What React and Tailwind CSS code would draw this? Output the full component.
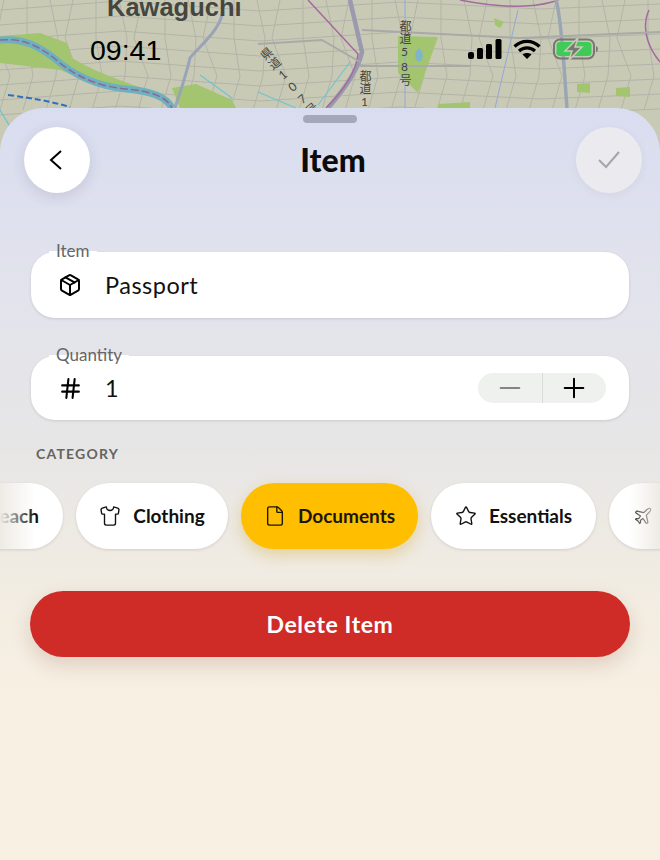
import React from 'react';
import { Package, Hash, Minus, Plus, Shirt, File, Star, Plane, Umbrella } from 'lucide-react';

const font = { fontFamily: 'Lato, "Noto Sans CJK JP", sans-serif' };

// thin street lines for the map backdrop
const streets = [];
for (let i = 0; i < 30; i++) {
  const x = i * 23 + 4;
  streets.push(`M${x} 0 L${x + (i % 3) * 8 - 8} 38 L${x + 6} 76 L${x - 4} 110`);
}
for (let i = 0; i < 8; i++) {
  const y = i * 15 + 4;
  streets.push(`M0 ${y + 6} L120 ${y - 3} L260 ${y + 7} L400 ${y - 2} L540 ${y + 5} L660 ${y}`);
}

const MapBackdrop = () => (
  <div className="absolute inset-x-0 top-0 h-[150px] bg-[#c9cab6]">
    <svg width="660" height="150" className="absolute inset-0" fill="none">
      <path d={streets.join(' ')} stroke="#b3b4a8" strokeWidth="1" />
      <path d="M0 36 L40 33 L67 43 L72 58 C95 72 125 82 142 88 L110 88 C90 82 75 76 60 70 L0 63 Z" fill="#a3c56f" />
      <path d="M172 88 L196 84 L232 100 L236 108 L180 108 Z" fill="#a3c56f" />
      <path d="M398 36 L438 37 L418 93 L398 73 Z" fill="#a3c56f" />
      <path d="M419 48 C424 52 424 60 419 62 C414 60 414 52 419 48 Z" fill="#7fb4cb" />
      <path d="M494 18 L504 22 L500 28 L495 25 Z M577 84 L590 83 L590 93 L577 92 Z M616 88 L630 87 L630 97 L616 96 Z M438 104 L470 102 L470 108 L438 108 Z" fill="#a3c56f" />
      <path d="M0 40 C24 38 38 46 54 58 C72 74 94 86 126 89 C150 91 166 96 172 108" stroke="#6fb0c0" strokeWidth="7" />
      <path d="M0 40 C24 38 38 46 54 58 C72 74 94 86 126 89 C150 91 166 96 172 108" stroke="#8a6a95" strokeWidth="1.5" strokeDasharray="8 3" />
      <path d="M8 95 C30 98 50 101 70 107" stroke="#2f6fc0" strokeWidth="2" strokeDasharray="6 3" />
      <path d="M222 14 C220 30 196 50 190 58 C186 76 180 92 175 108" stroke="#9aa4b8" strokeWidth="3" />
      <path d="M350 0 L362 52 C358 72 342 92 328 108" stroke="#9a99ae" strokeWidth="4.5" />
      <path d="M308 0 L358 54 C356 74 340 94 326 108" stroke="#a46aa0" strokeWidth="1.5" />
      <path d="M460 0 C500 8 530 8 552 2 C560 0 560 -2 562 -2" stroke="#a46aa0" strokeWidth="1.5" />
      <path d="M556 0 C562 20 564 70 567 108" stroke="#9aa6b4" strokeWidth="3.5" />
      <path d="M649 10 C640 30 650 50 660 62" stroke="#a46aa0" strokeWidth="1.5" />
      <path d="M405 0 L405 108 M518 10 L495 108" stroke="#90a8d8" strokeWidth="1" />
      <path d="M350 62 L318 105 M200 75 L232 98 M0 110 L24 150 M258 92 L296 108" stroke="#6fc4cf" strokeWidth="1.2" />
      <path d="M362 30 L520 38 L660 32 M258 44 L322 40 L360 62 M360 66 L470 66" stroke="#a9aaa6" strokeWidth="2" />
    </svg>
    <span className="absolute left-[107px] top-[-12px] text-[25.5px] font-bold text-[#45463f]" style={{ fontFamily: 'Liberation Sans, sans-serif' }}>Kawaguchi</span>
    <span className="absolute left-[398px] top-[20px] text-[12px] leading-[13px] text-[#45463f] [text-orientation:upright] [writing-mode:vertical-rl]" style={font}>都道58号</span>
    <span className="absolute left-[358px] top-[70px] text-[12px] leading-[13px] text-[#45463f] [text-orientation:upright] [writing-mode:vertical-rl]" style={font}>都道1</span>
    <span className="absolute left-[282px] top-[40px] rotate-[-39deg] text-[12px] leading-[13px] tracking-[0.5px] text-[#45463f] [text-orientation:upright] [writing-mode:vertical-rl]" style={font}>県道107号</span>
  </div>
);

const StatusIcons = () => (
  <div className="flex items-center">
    <svg width="34" height="20" viewBox="0 0 34 20" fill="#000">
      <rect x="0" y="13" width="6" height="7" rx="2" />
      <rect x="9" y="9" width="6" height="11" rx="1.5" />
      <rect x="18" y="5" width="6" height="15" rx="1.5" />
      <rect x="27.5" y="0" width="6" height="20" rx="1.5" />
    </svg>
    <svg width="28" height="20" viewBox="0 0 28 20" fill="none" stroke="#000" strokeWidth="3.2" className="ml-[11px]">
      <path d="M1.5 7.5 C8.5 0.6 19.5 0.6 26.5 7.5" />
      <path d="M6 12 C10.5 7.8 17.5 7.8 22 12" />
      <path d="M14 20 L9.5 15.6 C12 13.6 16 13.6 18.5 15.6 Z" fill="#000" stroke="none" />
    </svg>
    <svg width="46" height="22" viewBox="0 0 46 22" fill="none" className="ml-[12px]">
      <rect x="1" y="1.5" width="40" height="19" rx="6" stroke="#77786f" strokeWidth="2" />
      <rect x="3.5" y="4" width="35" height="14" rx="3.5" fill="#3ecb58" />
      <path d="M43 8 C45.500 8.500 45.500 13.500 43 14 Z" fill="#77786f" />
      <path d="M25 0 L12 13 H19 L16 22 L29 9 H22 Z" fill="#77786f" stroke="#c9cbb7" strokeWidth="1.500" />
    </svg>
  </div>
);

const Field = ({ label, icon, value, height, children }) => (
  <div className={`relative mx-px flex items-center rounded-[24px] bg-white pl-[26px] pr-[23px] shadow-[0_1px_3px_rgba(0,0,0,0.12)] ${height}`}>
    <span className="absolute left-[18px] top-[-11px] rounded-t-md bg-[linear-gradient(to_bottom,transparent_50%,#ffffff_50%)] px-[7px] text-[17px] leading-5 text-[#666666]">{label}</span>
    <span className="flex w-[26px] justify-center text-black">{icon}</span>
    <span className="ml-[22px] flex-1 pt-[2px] text-[23.5px] tracking-[0.5px] text-[#111111]">{value}</span>
    {children}
  </div>
);

const Chip = ({ icon, label, width, active, end }) => (
  <div className={`flex h-[66px] shrink-0 items-center gap-[12px] rounded-full text-[19px] font-bold ${width} ${end ? 'justify-end pr-[24px]' : 'justify-center'} ${active ? 'bg-[#ffbe00] text-[#1b1600] shadow-[0_6px_16px_rgba(200,150,0,0.3)]' : 'bg-white text-[#111111] shadow-[0_1px_3px_rgba(0,0,0,0.12)]'}`}>
    {icon}
    <span>{label}</span>
  </div>
);

const App = () => {
  return (
    <div className="relative h-[860px] w-[660px] overflow-hidden bg-[#f8f0e2]" style={font}>
      <MapBackdrop />

      {/* Status bar */}
      <div className="relative flex h-[108px] items-start justify-between pl-[90px] pr-[61px] pt-[33px]">
        <span className="text-[28.5px] leading-[34px] text-black" style={{ fontFamily: 'Liberation Sans, sans-serif' }}>09:41</span>
        <div className="pt-[5px]"><StatusIcons /></div>
      </div>

      {/* Sheet */}
      <div className="relative h-[752px] rounded-t-[44px] bg-[linear-gradient(to_bottom,#d9ddf0_0px,#e2e3ec_190px,#e7e6e6_340px,#f1ece2_470px,#f8f0e2_600px)] px-[30px]">
        <div className="absolute left-[303px] top-[7px] h-[8px] w-[54px] rounded-full bg-[#a4a8ba]" />

        <div className="-ml-[6px] -mr-[12px] flex items-center justify-between pt-[19px]">
          <button className="flex h-[66px] w-[66px] items-center justify-center rounded-full bg-white shadow-[0_4px_14px_rgba(60,60,90,0.14)]">
            <svg width="14" height="20" viewBox="0 0 14 20" fill="none" stroke="#000" strokeWidth="2" className="mr-[3px]">
              <path d="M12 1 L2 10 L12 19" />
            </svg>
          </button>
          <h1 className="text-[32px] font-black leading-[44px] text-[#0c0c0c]">Item</h1>
          <button className="flex h-[66px] w-[66px] items-center justify-center rounded-full bg-[#ebebef] shadow-[0_2px_8px_rgba(60,60,90,0.06)]">
            <svg width="24" height="20" viewBox="0 0 24 20" fill="none" stroke="#a5a5a8" strokeWidth="2">
              <path d="M2 10 L9 17 L22 2" />
            </svg>
          </button>
        </div>

        <div className="mt-[59px]">
          <Field label="Item" value="Passport" height="h-[66px]" icon={<Package size={24} strokeWidth={2} />} />
        </div>

        <div className="mt-[38px]">
          <Field label="Quantity" value="1" height="h-[64px]" icon={<Hash size={25} strokeWidth={2} />}>
            <div className="flex h-[30px] w-[128px] items-center rounded-full bg-[#eff1ef]">
              <span className="flex h-full flex-1 items-center justify-center border-r border-[#d9dbd9]">
                <Minus size={32} strokeWidth={1.5} className="text-[#85857f]" />
              </span>
              <span className="flex h-full flex-1 items-center justify-center">
                <Plus size={32} strokeWidth={1.5} className="text-black" />
              </span>
            </div>
          </Field>
        </div>

        <div className="ml-[6px] mt-[24px] text-[14px] font-bold leading-[20px] tracking-[1.2px] text-[#65635e]">CATEGORY</div>

        {/* Category chips */}
        <div className="relative -mx-[30px] mt-[19px] h-[66px]">
          <div className="-ml-[87px] flex gap-[13px]">
            <Chip width="w-[150px]" label="Beach" end icon={<Umbrella size={22} strokeWidth={1.5} />} />
            <Chip width="w-[152px]" label="Clothing" icon={<Shirt size={22} strokeWidth={1.5} />} />
            <Chip width="w-[177px]" label="Documents" active icon={<File size={22} strokeWidth={1.5} />} />
            <Chip width="w-[165px]" label="Essentials" icon={<Star size={22} strokeWidth={1.5} />} />
            <div className="flex h-[66px] w-[120px] shrink-0 items-center rounded-full bg-white pl-[24px] shadow-[0_1px_3px_rgba(0,0,0,0.12)]">
              <Plane size={20} strokeWidth={1.5} className="text-[#222222]" />
            </div>
          </div>
          <div className="absolute inset-y-0 left-0 w-[36px] bg-gradient-to-r from-[#eeebe5] to-transparent" />
          <div className="absolute inset-y-0 right-0 w-[30px] bg-gradient-to-l from-[#eeebe5] to-transparent" />
        </div>

        <button className="mt-[42px] flex h-[66px] w-[600px] items-center justify-center rounded-full bg-[#cf2c27] text-[23px] font-bold tracking-[0.6px] text-white shadow-[0_8px_20px_rgba(120,60,40,0.18)]">
          Delete Item
        </button>
      </div>
    </div>
  );
};

export default App;
